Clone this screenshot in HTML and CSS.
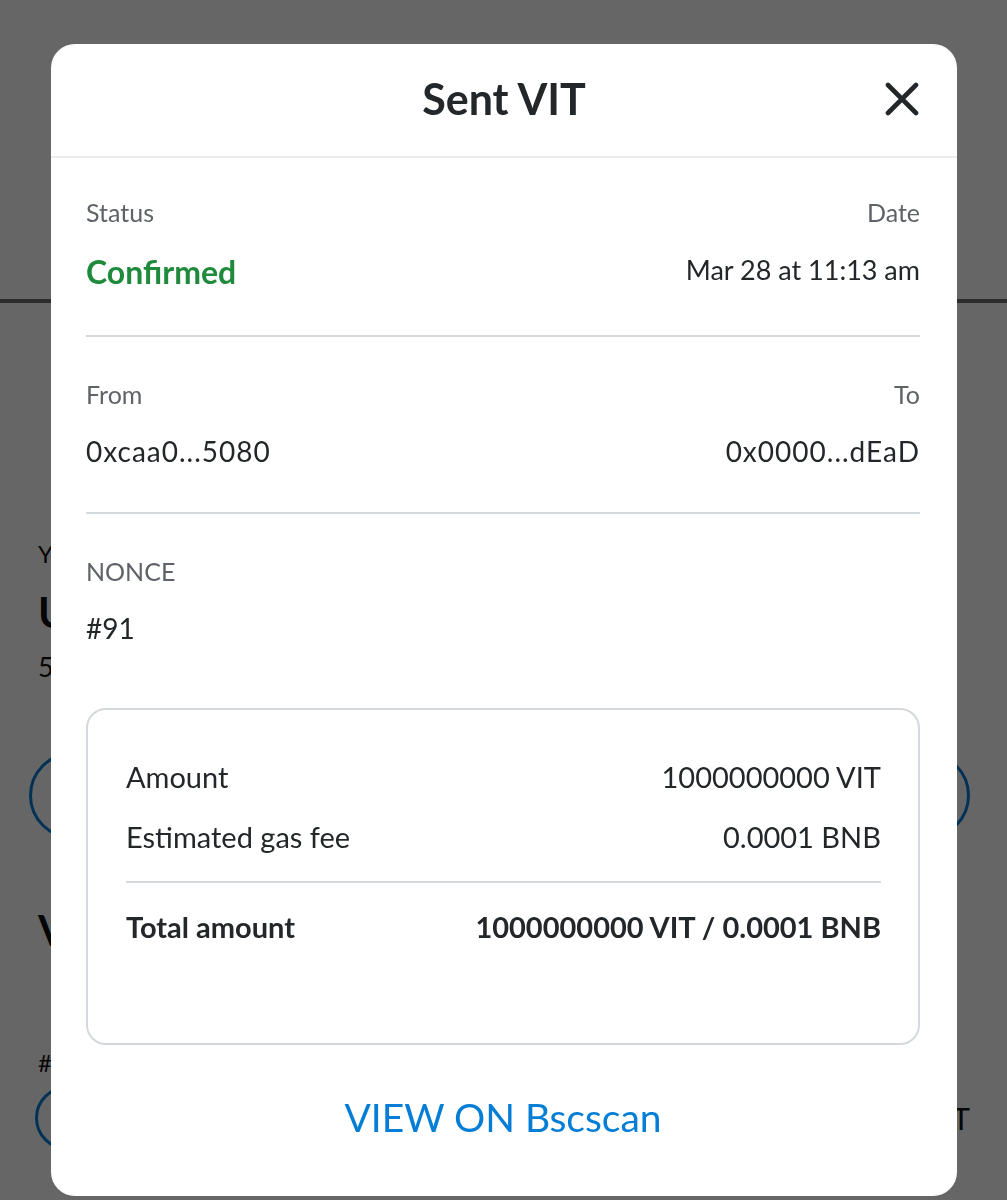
FILE: index.html
```
<!DOCTYPE html>
<html>

	<head>
		<meta charset="UTF-8">
		<title>Sent VIT</title>
		<link rel="stylesheet" href="styles.css">
	</head>

	<body>
		<div class="page">
			<div class="page-head"></div>
			<div class="page-body">
				<p class="bg-label">Y</p>
				<p class="bg-title">U</p>
				<p class="bg-sub">5</p>
				<div class="bg-actions">
					<span class="bg-circle"></span>
					<span class="bg-circle"></span>
				</div>
				<p class="bg-title bg-title2">V</p>
				<p class="bg-label bg-hash">#</p>
				<div class="bg-item">
					<span class="bg-pill"></span>
					<span class="bg-end">T</span>
				</div>
			</div>
		</div>
		<div class="overlay"></div>

		<div class="modal">
			<div class="modal-head">
				<h1>Sent VIT</h1>
				<a href="javascript:;" class="close">
					<svg width="34" height="34" viewBox="0 0 34 34">
						<path d="M3 3L31 31M31 3L3 31" stroke="#24272a" stroke-width="4.6" stroke-linecap="round" fill="none" />
					</svg>
				</a>
			</div>
			<div class="modal-body">
				<div class="section first">
					<div class="col">
						<p class="label">Status</p>
						<p class="value status">Confirmed</p>
					</div>
					<div class="col right">
						<p class="label">Date</p>
						<p class="value date">Mar 28 at 11:13 am</p>
					</div>
				</div>
				<div class="section">
					<div class="col">
						<p class="label">From</p>
						<p class="value addr">0xcaa0...5080</p>
					</div>
					<div class="col right">
						<p class="label">To</p>
						<p class="value addr">0x0000...dEaD</p>
					</div>
				</div>
				<div class="section last">
					<div class="col">
						<p class="label">NONCE</p>
						<p class="value">#91</p>
					</div>
				</div>
				<div class="card">
					<div class="card-row">
						<span>Amount</span>
						<span>1000000000 VIT</span>
					</div>
					<div class="card-row">
						<span>Estimated gas fee</span>
						<span>0.0001 BNB</span>
					</div>
					<div class="card-row total">
						<span>Total amount</span>
						<span>1000000000 VIT / 0.0001 BNB</span>
					</div>
				</div>
				<a href="javascript:;" class="explorer">VIEW ON Bscscan</a>
			</div>
		</div>
	</body>

</html>
```

FILE: styles.css
```
* {
	margin: 0;
	padding: 0;
	box-sizing: border-box;
}

body {
	width: 1007px;
	height: 1200px;
	overflow: hidden;
	background: #fff;
	font-family: Lato, "Liberation Sans", sans-serif;
	color: #24272a;
}

a {
	text-decoration: none;
}

/* page behind the dialog */
.page-head {
	height: 303px;
	border-bottom: 4px solid #6e6e6e;
}

.page-body {
	padding: 0 37px 0 38px;
}

.bg-label {
	font-size: 24px;
	line-height: 30px;
	margin-top: 236px;
	color: #111;
}

.bg-title {
	font-size: 42px;
	font-weight: 700;
	line-height: 44px;
	margin-top: 21px;
	color: #111;
}

.bg-sub {
	font-size: 27px;
	line-height: 30px;
	margin-top: 18px;
	color: #111;
}

.bg-actions {
	display: flex;
	justify-content: space-between;
	margin: 70px 0 0 -9px;
}

.bg-circle {
	width: 87px;
	height: 87px;
	border: 3px solid #037dd6;
	border-radius: 50%;
}

.bg-title2 {
	margin-top: 69px;
}

.bg-hash {
	margin-top: 96px;
}

.bg-item {
	display: flex;
	justify-content: space-between;
	align-items: center;
	margin: 8px 0 0 -3px;
}

.bg-pill {
	width: 220px;
	height: 64px;
	border: 3px solid #037dd6;
	border-radius: 32px;
}

.bg-end {
	font-size: 30px;
	color: #111;
}

.overlay {
	position: fixed;
	left: 0;
	top: 0;
	right: 0;
	bottom: 0;
	background: rgba(0, 0, 0, 0.6);
}

/* dialog */
.modal {
	position: absolute;
	left: 51px;
	top: 44px;
	width: 906px;
	height: 1152px;
	background: #fff;
	border-radius: 24px;
	overflow: hidden;
}

.modal-head {
	height: 114px;
	border-bottom: 2px solid #ebebeb;
	display: flex;
	align-items: center;
	justify-content: center;
	position: relative;
}

.modal-head h1 {
	font-size: 43px;
	font-weight: 700;
	line-height: 50px;
	margin-top: -2px;
}

.close {
	position: absolute;
	right: 38px;
	top: 38px;
	width: 34px;
	height: 34px;
}

.close svg {
	display: block;
}

.modal-body {
	padding: 0 37px 0 35px;
}

.section {
	display: flex;
	justify-content: space-between;
	padding: 42px 0 43px;
	border-bottom: 2px solid #d6d9dc;
}

.section.first {
	padding: 39px 0 43px;
}

.section.last {
	padding-bottom: 0;
	border-bottom: none;
}

.col.right {
	text-align: right;
}

.label {
	font-size: 25px;
	line-height: 30px;
	color: #5f6368;
}

.value {
	font-size: 28px;
	line-height: 36px;
	margin-top: 24px;
}

.value.date {
	font-size: 27px;
	margin-top: 25px;
}

.value.addr {
	letter-spacing: 1px;
}

.value.status {
	color: #1f8a3b;
	font-weight: 700;
	font-size: 32px;
	line-height: 40px;
	margin-top: 25px;
}

.card {
	margin-top: 62px;
	height: 337px;
	border: 2px solid #d6d9dc;
	border-radius: 20px;
	padding: 49px 37px 0 38px;
}

.card-row {
	display: flex;
	justify-content: space-between;
	font-size: 29px;
	line-height: 36px;
}

.card-row + .card-row {
	margin-top: 24px;
}

.card-row.total {
	margin-top: 26px;
	padding-top: 26px;
	border-top: 2px solid #d6d9dc;
	font-weight: 700;
}

.explorer {
	display: block;
	margin-top: 50px;
	text-align: center;
	font-size: 39px;
	line-height: 44px;
	color: #037dd6;
}
```
